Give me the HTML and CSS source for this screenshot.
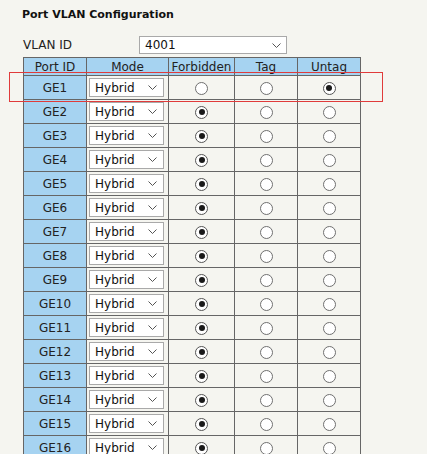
FILE: index.html
```html
<!DOCTYPE html>
<html lang="en">
<head>
    <meta charset="UTF-8">
    <title>Port VLAN Configuration</title>
    <link rel="stylesheet" href="styles.css">
</head>
<body>
    <div class="page">
        <h1>Port VLAN Configuration</h1>

        <div class="vlan-row">
            <span class="vlan-label">VLAN ID</span>
            <div class="select vlan-select">
                <span>4001</span>
                <svg class="chev" width="9" height="5" viewBox="0 0 9 5"><path d="M0.5 0.5 L4.5 4.5 L8.5 0.5" fill="none" stroke="#555" stroke-width="1"/></svg>
            </div>
        </div>

        <table class="ports">
            <thead>
                <tr>
                    <th class="c-port">Port ID</th>
                    <th class="c-mode">Mode</th>
                    <th class="c-forb">Forbidden</th>
                    <th class="c-tag">Tag</th>
                    <th class="c-untag">Untag</th>
                </tr>
            </thead>
            <tbody id="port-rows"></tbody>
        </table>

        <div class="highlight"></div>
    </div>

    <script>
        const rows = document.getElementById('port-rows');
        for (let i = 1; i <= 16; i++) {
            // GE1 is untagged, the rest are forbidden
            const sel = i === 1 ? 'untag' : 'forb';
            const radio = name => `<span class="radio${sel === name ? ' on' : ''}"></span>`;
            const tr = document.createElement('tr');
            tr.innerHTML = `
                <td class="port-id">GE${i}</td>
                <td>
                    <div class="select mode-select">
                        <span>Hybrid</span>
                        <svg class="chev" width="9" height="5" viewBox="0 0 9 5"><path d="M0.5 0.5 L4.5 4.5 L8.5 0.5" fill="none" stroke="#555" stroke-width="1"/></svg>
                    </div>
                </td>
                <td>${radio('forb')}</td>
                <td>${radio('tag')}</td>
                <td>${radio('untag')}</td>
            `;
            rows.appendChild(tr);
        }
    </script>
</body>
</html>
```

FILE: styles.css
```css
html, body {
    margin: 0;
    padding: 0;
    overflow: hidden;
}
body {
    background: #f5f5f0;
    font-family: "DejaVu Sans", Verdana, sans-serif;
    font-size: 12px;
    color: #222;
}
.page {
    position: relative;
    padding: 8px 0 0 22px;
}
h1 {
    margin: 0;
    font-size: 11px;
    font-weight: bold;
    line-height: 13px;
    color: #111;
}
.vlan-row {
    display: flex;
    align-items: center;
    margin-top: 15px;
    height: 18px;
}
.vlan-label {
    width: 116px;
    padding-left: 1px;
}
.select {
    display: flex;
    align-items: center;
    justify-content: space-between;
    box-sizing: border-box;
    background: #fff;
    border: 1px solid #a9a9a9;
    color: #111;
}
.vlan-select {
    width: 148px;
    height: 18px;
    padding: 0 5px 0 5px;
}
.chev {
    display: block;
}
.ports {
    border-collapse: collapse;
    margin-top: 3px;
    margin-left: 1px;
}
.ports th,
.ports td {
    border: 1px solid #666;
    padding: 0;
    text-align: center;
}
.ports th {
    background: #a6d3f1;
    font-weight: normal;
    height: 17px;
    line-height: 14px;
}
.ports td {
    height: 23px;
}
.c-port { width: 62px; }
.c-mode { width: 81px; }
.c-forb { width: 65px; }
.c-tag { width: 62px; }
.c-untag { width: 62px; }
.port-id {
    background: #a6d3f1;
}
.mode-select {
    width: 75px;
    height: 19px;
    margin-left: 2px;
    padding: 0 6px 0 5px;
    text-align: left;
}
.radio {
    display: inline-block;
    box-sizing: border-box;
    width: 13px;
    height: 13px;
    border: 1px solid #707070;
    border-radius: 50%;
    background: #fff;
    vertical-align: middle;
    position: relative;
}
.radio.on {
    border-color: #555;
}
.radio.on::after {
    content: "";
    position: absolute;
    left: 2.5px;
    top: 2.5px;
    width: 6px;
    height: 6px;
    border-radius: 50%;
    background: #1a1a1a;
}
.highlight {
    position: absolute;
    left: 9px;
    top: 72px;
    width: 374px;
    height: 30px;
    box-sizing: border-box;
    border: 1px solid #e03b3b;
    pointer-events: none;
}
```
